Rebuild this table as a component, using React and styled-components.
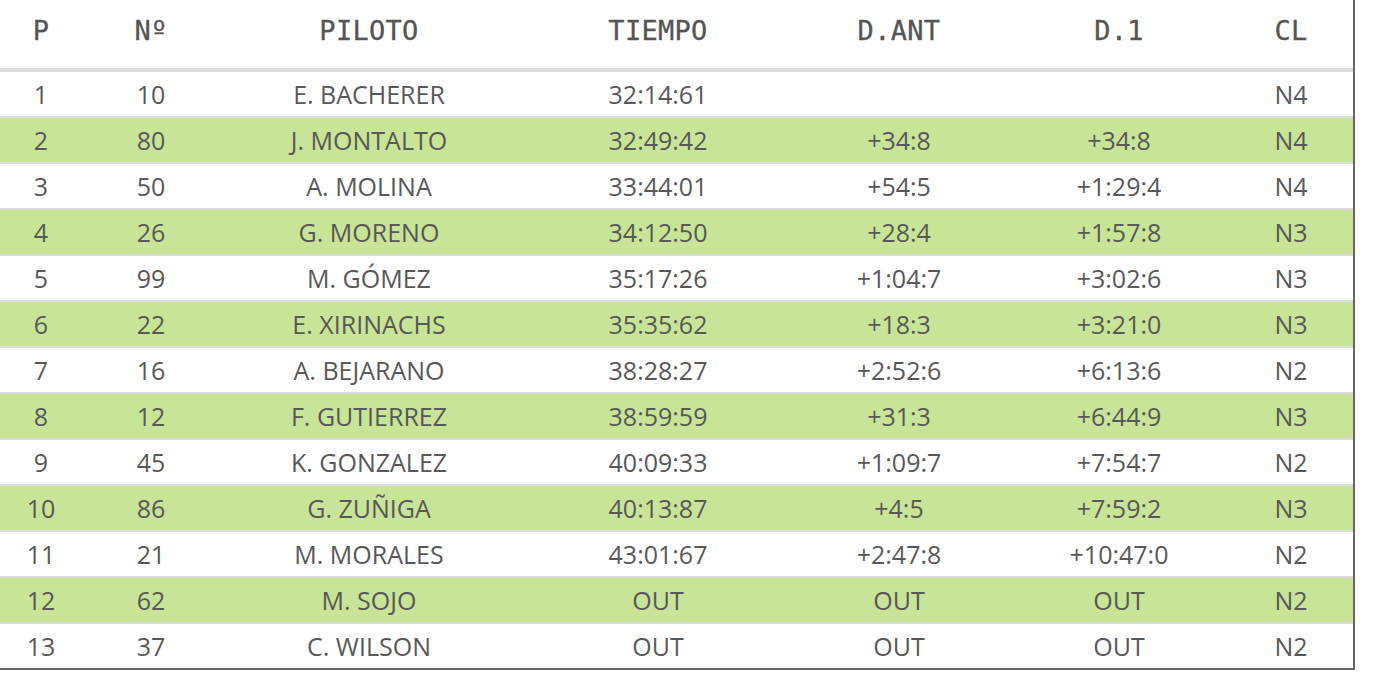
import React from "react";
import styled, { createGlobalStyle } from "styled-components";

const Global = createGlobalStyle`
  body {
    margin: 0;
    background: #fff;
    color: #555;
    font-family: "Open Sans", "Noto Sans", sans-serif;
  }
`;

const COLS = "82px 138px 298px 280px 202px 238px 106px";

const results = [
  ["1", "10", "E. BACHERER", "32:14:61", "", "", "N4"],
  ["2", "80", "J. MONTALTO", "32:49:42", "+34:8", "+34:8", "N4"],
  ["3", "50", "A. MOLINA", "33:44:01", "+54:5", "+1:29:4", "N4"],
  ["4", "26", "G. MORENO", "34:12:50", "+28:4", "+1:57:8", "N3"],
  ["5", "99", "M. GÓMEZ", "35:17:26", "+1:04:7", "+3:02:6", "N3"],
  ["6", "22", "E. XIRINACHS", "35:35:62", "+18:3", "+3:21:0", "N3"],
  ["7", "16", "A. BEJARANO", "38:28:27", "+2:52:6", "+6:13:6", "N2"],
  ["8", "12", "F. GUTIERREZ", "38:59:59", "+31:3", "+6:44:9", "N3"],
  ["9", "45", "K. GONZALEZ", "40:09:33", "+1:09:7", "+7:54:7", "N2"],
  ["10", "86", "G. ZUÑIGA", "40:13:87", "+4:5", "+7:59:2", "N3"],
  ["11", "21", "M. MORALES", "43:01:67", "+2:47:8", "+10:47:0", "N2"],
  ["12", "62", "M. SOJO", "OUT", "OUT", "OUT", "N2"],
  ["13", "37", "C. WILSON", "OUT", "OUT", "OUT", "N2"],
];

const headers = ["P", "Nº", "PILOTO", "TIEMPO", "D.ANT", "D.1", "CL"];

const Table = styled.div`
  width: 1353px;
  border-right: 2px solid #666;
  border-bottom: 2px solid #666;
`;

const HeadRow = styled.div`
  display: grid;
  grid-template-columns: ${COLS};
  align-items: center;
  height: 60px;
  padding: 0 9px 8px 0;
  border-bottom: 4px solid #dcdcdc;
`;

const HeadCell = styled.div`
  text-align: center;
  font-family: "DejaVu Sans Mono", monospace;
  font-weight: 400;
  font-size: 27px;
  color: #555;
  -webkit-text-stroke: 0.3px #555;
  letter-spacing: 0.3px;
`;

const Row = styled.div`
  display: grid;
  grid-template-columns: ${COLS};
  align-items: center;
  height: 44px;
  padding-right: 9px;
  background: ${(p) => (p.$alt ? "#c8e496" : "#fff")};
  border-bottom: 2px solid #dcdcdc;

  &:last-child {
    border-bottom: none;
  }
`;

const Cell = styled.div`
  text-align: center;
  font-size: 25px;
  font-weight: 400;
  color: #585858;
  line-height: 1;
`;

export default function App() {
  return (
    <>
      <Global />
      <Table>
        <HeadRow>
          {headers.map((h) => (
            <HeadCell key={h}>{h}</HeadCell>
          ))}
        </HeadRow>
        {results.map((r, i) => (
          <Row key={r[0]} $alt={i % 2 === 1}>
            {r.map((v, j) => (
              <Cell key={j}>{v}</Cell>
            ))}
          </Row>
        ))}
      </Table>
    </>
  );
}
